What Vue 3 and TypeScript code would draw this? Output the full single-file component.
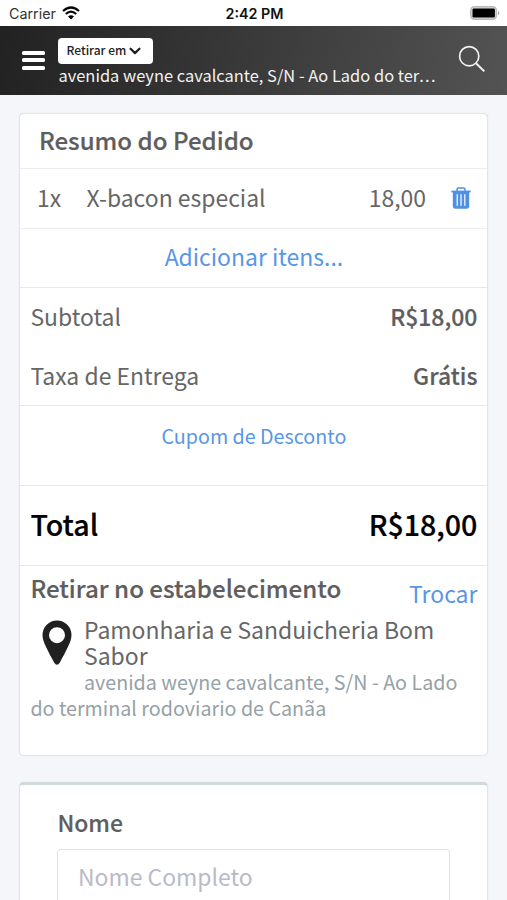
<script setup lang="ts">
import { computed, ref } from 'vue'

interface OrderItem {
  quantity: number
  name: string
  price: string
}

const items = ref<OrderItem[]>([{ quantity: 1, name: 'X-bacon especial', price: '18,00' }])
const name = ref('')
const address = 'avenida weyne cavalcante, S/N - Ao Lado do terminal rodoviario de Canãa'
const shortAddress = computed(() => address.slice(0, 46))
</script>

<template>
  <div class="screen">
    <div class="status">
      <div class="carrier">
        <span>Carrier</span>
        <svg class="wifi" viewBox="0 0 18 14" fill="none" stroke="#050505">
          <path d="M1 5Q9-2 17 5" stroke-width="2.2" />
          <path d="M3.8 8Q9 3.4 14.2 8" stroke-width="2.1" />
          <path d="M6 10.6Q9 7.8 12 10.6L9 13.6Z" fill="#050505" stroke="none" />
        </svg>
      </div>
      <div class="clock">2:42 PM</div>
      <svg class="battery" viewBox="0 0 30 14">
        <rect x=".8" y=".8" width="25.6" height="12.4" rx="3.6" fill="#ddd" stroke="#bababa" stroke-width="1.5" />
        <rect x="2.5" y="2.5" width="22.4" height="9" rx="1.2" fill="#000" />
        <path d="M28 4.7q3 2.3 0 4.6z" fill="#aaa" />
      </svg>
    </div>

    <header class="topbar">
      <div class="menu"><i></i><i></i><i></i></div>
      <div class="place">
        <button class="mode">
          <span>Retirar em</span>
          <svg viewBox="0 0 12 8" fill="none" stroke="#222" stroke-width="2.3" stroke-linecap="round" stroke-linejoin="round">
            <path d="M1.6 1.8 6 6.1l4.4-4.3" />
          </svg>
        </button>
        <div class="address">{{ shortAddress }}<span class="dots">...</span></div>
      </div>
      <svg class="search" viewBox="0 0 28 28" fill="none" stroke="#f2f2f2" stroke-width="1.7">
        <circle cx="11.2" cy="11.2" r="9.6" />
        <path d="M18 18.2 26.3 26.4" stroke-width="2" />
      </svg>
    </header>

    <main>
      <section class="card summary">
        <h2 class="title">Resumo do Pedido</h2>
        <div v-for="item in items" :key="item.name" class="item">
          <span class="qty">{{ item.quantity }}x</span>
          <span class="product">{{ item.name }}</span>
          <span class="price">{{ item.price }}</span>
          <svg class="trash" viewBox="0 0 20 22" fill="none" stroke="#5090e4">
            <path d="M6 4V2.4Q6 1 7.4 1h5.2Q14 1 14 2.4V4" stroke-width="1.5" />
            <path d="M.4 4.5h19.2" stroke-width="1.8" />
            <path d="M1.8 5h16.4v14.3q0 2.4-2.4 2.4H4.2q-2.4 0-2.4-2.4z" fill="#5090e4" stroke="none" />
            <path d="M6.2 7.2v11.6M10 7.2v11.6M13.8 7.2v11.6" stroke="#fff" stroke-width="1.2" />
          </svg>
        </div>
        <a class="add">Adicionar itens...</a>
        <div class="fees">
          <div class="row"><span>Subtotal</span><b>R$18,00</b></div>
          <div class="row"><span>Taxa de Entrega</span><b>Grátis</b></div>
        </div>
        <a class="coupon">Cupom de Desconto</a>
        <div class="row total"><b>Total</b><b>R$18,00</b></div>
        <div class="pickup">
          <div class="pickup-head">
            <b>Retirar no estabelecimento</b>
            <a>Trocar</a>
          </div>
          <div class="store">
            <svg class="pin" viewBox="0 0 30 45">
              <path fill="#202020" fill-rule="evenodd" d="M15 .5A14.5 14.5 0 0 0 .5 15C.5 22 6.2 31 12.1 42.6Q15 47 17.9 42.6C23.8 31 29.5 22 29.5 15A14.5 14.5 0 0 0 15 .5ZM15 7.2a8 8 0 1 1 0 16 8 8 0 0 1 0-16Z" />
            </svg>
            <div class="store-name">Pamonharia e Sanduicheria Bom Sabor</div>
          </div>
          <p class="store-address">{{ address }}</p>
        </div>
      </section>

      <section class="card customer">
        <label for="name">Nome</label>
        <input id="name" v-model="name" placeholder="Nome Completo" />
      </section>
    </main>
  </div>
</template>

<style>
body {
  margin: 0;
  overflow: hidden;
  background: #f4f6fa;
}
</style>

<style scoped>
* {
  box-sizing: border-box;
}
.screen {
  width: 507px;
  height: 900px;
  overflow: hidden;
  background: #f4f6fa;
  color: #666;
  font: 400 22.95px/26px "Noto Sans CJK SC", "Noto Sans", sans-serif;
  white-space: nowrap;
}
b, h2, label {
  font-weight: 500;
  color: #5e5e5e;
  -webkit-text-stroke: 0.2px currentColor;
}
a {
  color: #5896e6;
}
.status {
  display: grid;
  grid-template-columns: 1fr auto 1fr;
  align-items: center;
  height: 26px;
  padding: 1px 7px 0 9px;
  background: #fff;
  font: 14.3px/20px Inter, "Liberation Sans", sans-serif;
  color: #333;
}
.carrier {
  display: flex;
  align-items: center;
  gap: 6px;
}
.wifi {
  width: 18px;
  height: 14px;
  margin-top: -2px;
}
.clock {
  font-weight: 600;
  color: #111;
}
.battery {
  width: 30px;
  height: 14px;
  margin-top: -1px;
  justify-self: end;
}
.topbar {
  display: flex;
  height: 69px;
  padding: 0 21px 0 22px;
  background: linear-gradient(100deg, #222, #353535 40%, #535353);
}
.menu {
  display: flex;
  flex-direction: column;
  gap: 3.5px;
  width: 23px;
  margin: 24.5px 13px 0 0;
}
.menu i {
  height: 4.2px;
  border-radius: 1.5px;
  background: #fff;
}
.place {
  width: 382px;
  padding-top: 12px;
}
.mode {
  display: flex;
  align-items: center;
  gap: 3px;
  width: 95px;
  height: 26px;
  padding: 0 8px 2px 8.5px;
  border: 0;
  border-radius: 4px;
  background: #fff;
  color: #222;
  font: 500 12px/20px "Noto Sans CJK SC", sans-serif;
}
.mode svg {
  width: 12px;
  height: 8px;
  margin-top: 2px;
}
.address {
  padding-left: 0.5px;
  color: #f2f2f2;
  font-size: 16.45px;
  line-height: 22px;
}
.dots {
  letter-spacing: 1.3px;
}
.search {
  width: 28px;
  height: 28px;
  margin: 18.5px 0 0 auto;
  flex: none;
}
main {
  padding: 18px 18.6px 0 19.4px;
}
.card {
  border: 1px solid #e2e5e9;
  border-radius: 5px;
  background: #fff;
  box-shadow: 0 0 1px #d5d9de;
}
.summary {
  height: 643px;
}
.title {
  height: 55px;
  margin: 0;
  padding: 13px 18.5px 0;
  font-size: 24.1px;
  border-bottom: 1px solid #ededef;
}
.item {
  display: flex;
  height: 60px;
  padding: 15px 16px 0 16.6px;
  border-bottom: 1px solid #ededef;
}
.qty {
  width: 49.5px;
}
.product {
  flex: 1;
}
.trash {
  width: 20px;
  height: 22px;
  margin: 2.5px 0 0 25.4px;
}
.add {
  display: block;
  height: 59px;
  padding-top: 14px;
  text-align: center;
  border-bottom: 1px solid #e8e8ea;
}
.fees {
  height: 118px;
  border-bottom: 1px solid #e8e8ea;
}
.row {
  display: flex;
  justify-content: space-between;
  height: 59px;
  padding: 15px 10px 0;
}
.coupon {
  display: block;
  height: 80px;
  padding-top: 17px;
  font-size: 19.7px;
  text-align: center;
  border-bottom: 1px solid #e8e8ea;
}
.total {
  height: 80px;
  padding-top: 25px;
  font-size: 28.6px;
  border-bottom: 1px solid #e8e8ea;
}
.total b {
  color: #000;
}
.pickup {
  padding: 9px 10px 0;
}
.pickup-head {
  display: flex;
  justify-content: space-between;
  height: 41px;
}
.pickup-head b {
  font-size: 24.1px;
}
.pickup-head a {
  padding-top: 5px;
}
.store {
  display: flex;
  gap: 11.6px;
  padding-left: 12px;
}
.pin {
  width: 30px;
  height: 45px;
  margin-top: 4px;
  flex: none;
}
.store-name {
  width: 370px;
  white-space: normal;
}
.store-address {
  width: 434px;
  margin: 0;
  padding-top: 1px;
  text-indent: 53.6px;
  white-space: normal;
  color: #95a1a6;
  font-size: 19.7px;
}
.customer {
  height: 140px;
  margin-top: 26px;
  padding: 24px 37px 0;
  border-top: 3px solid #cedadb;
}
.customer label {
  display: block;
  height: 40px;
}
.customer input {
  display: block;
  width: 393px;
  height: 56px;
  padding: 0 20px 2px 19.6px;
  border: 1px solid #dfe4e7;
  border-radius: 3px;
  background: #fff;
  font: 400 22.95px/26px "Noto Sans CJK SC", sans-serif;
}
.customer input::placeholder {
  color: #b9bac8;
}
</style>
